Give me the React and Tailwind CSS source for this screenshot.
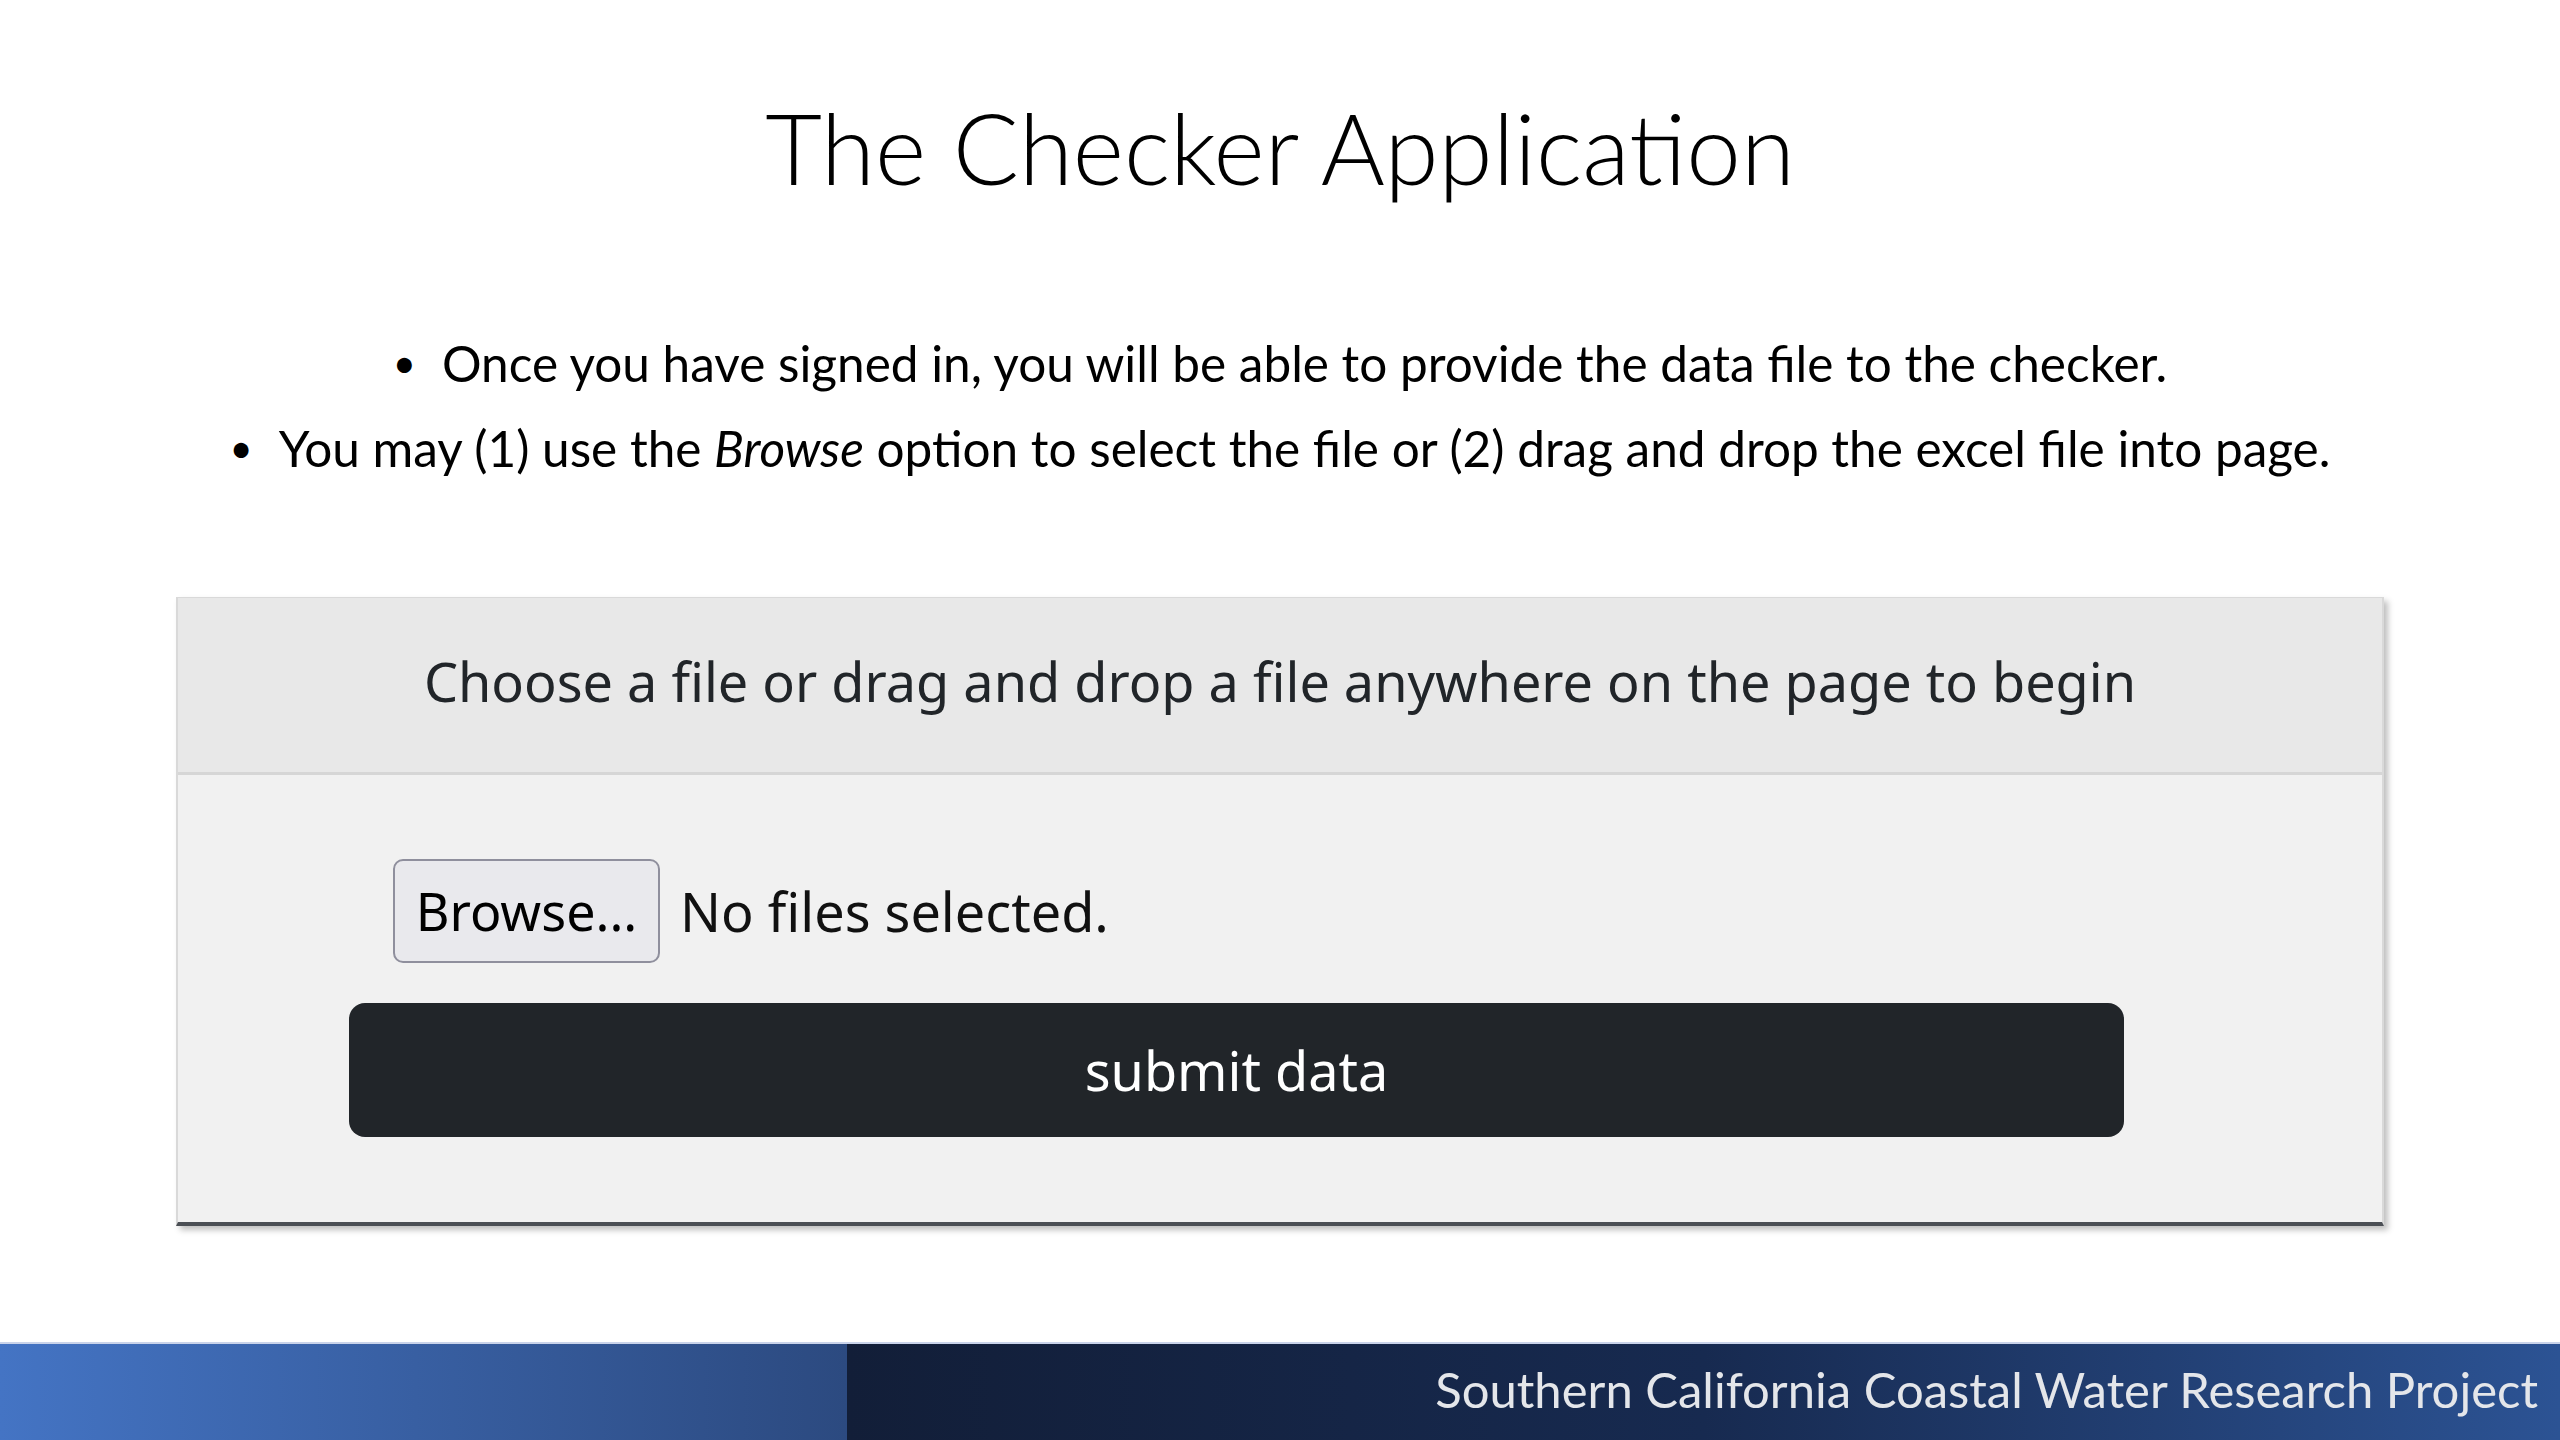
export default function App() {
  const lato = { fontFamily: 'Lato, "Open Sans", sans-serif' };
  return (
    <div className="w-[2560px] h-[1440px] bg-white flex flex-col overflow-hidden relative">
      <h1
        className="mt-[92px] text-center text-[98px] leading-[110px] font-light text-black"
        style={lato}
      >
        The Checker Application
      </h1>
      <div className="mt-[119px] flex flex-col items-center text-[49.5px] leading-[85px] text-black" style={lato}>
        <div className="flex items-center h-[85px]">
          <span className="mr-[26px] text-[40px]">•</span>
          <span>Once you have signed in, you will be able to provide the data file to the checker.</span>
        </div>
        <div className="flex items-center h-[85px]">
          <span className="mr-[26px] text-[40px]">•</span>
          <span>
            You may (1) use the <i>Browse</i> option to select the file or (2) drag and drop the excel file into page.
          </span>
        </div>
      </div>
      <div
        className="mt-[106px] ml-[176px] w-[2208px] h-[629px] flex flex-col bg-[#f1f1f1] border-x-2 border-t border-[#d9d9d9] border-b-[4px] border-b-[#4b4f55] shadow-[4px_4px_6px_rgba(0,0,0,0.25)]"
        style={{ fontFamily: '"Noto Sans", "Open Sans", sans-serif' }}
      >
        <div className="h-[177px] shrink-0 flex items-center justify-center pb-[8px] bg-[#e8e8e8] border-b-[3px] border-[#d6d6d6] text-[54px] text-[#212529]">
          Choose a file or drag and drop a file anywhere on the page to begin
        </div>
        <div className="flex flex-col pt-[84px]">
          <div className="ml-[215px] flex items-center">
            <div className="w-[267px] h-[104px] rounded-[10px] border-2 border-[#8f8f9d] bg-[#e9e9ed] flex items-center justify-center text-[52px] text-black">
              Browse...
            </div>
            <span className="ml-[20px] text-[54px] text-[#111]">No files selected.</span>
          </div>
          <div className="mt-[40px] ml-[171px] w-[1775px] h-[134px] rounded-[16px] bg-[#212529] flex items-center justify-center text-[54px] text-white">
            submit data
          </div>
        </div>
      </div>
      <div className="mt-auto h-[98px] flex border-t-2 border-[#c9d3ea]">
        <div className="w-[847px] h-full bg-gradient-to-r from-[#4474c4] to-[#2c4a80]" />
        <div
          className="flex-1 h-full bg-gradient-to-r from-[#121e38] via-[#172a50] to-[#2c5394] flex items-center justify-end pr-[22px] pb-[4px] text-[49px] text-[#e4e6ea]"
          style={lato}
        >
          Southern California Coastal Water Research Project
        </div>
      </div>
    </div>
  );
}
